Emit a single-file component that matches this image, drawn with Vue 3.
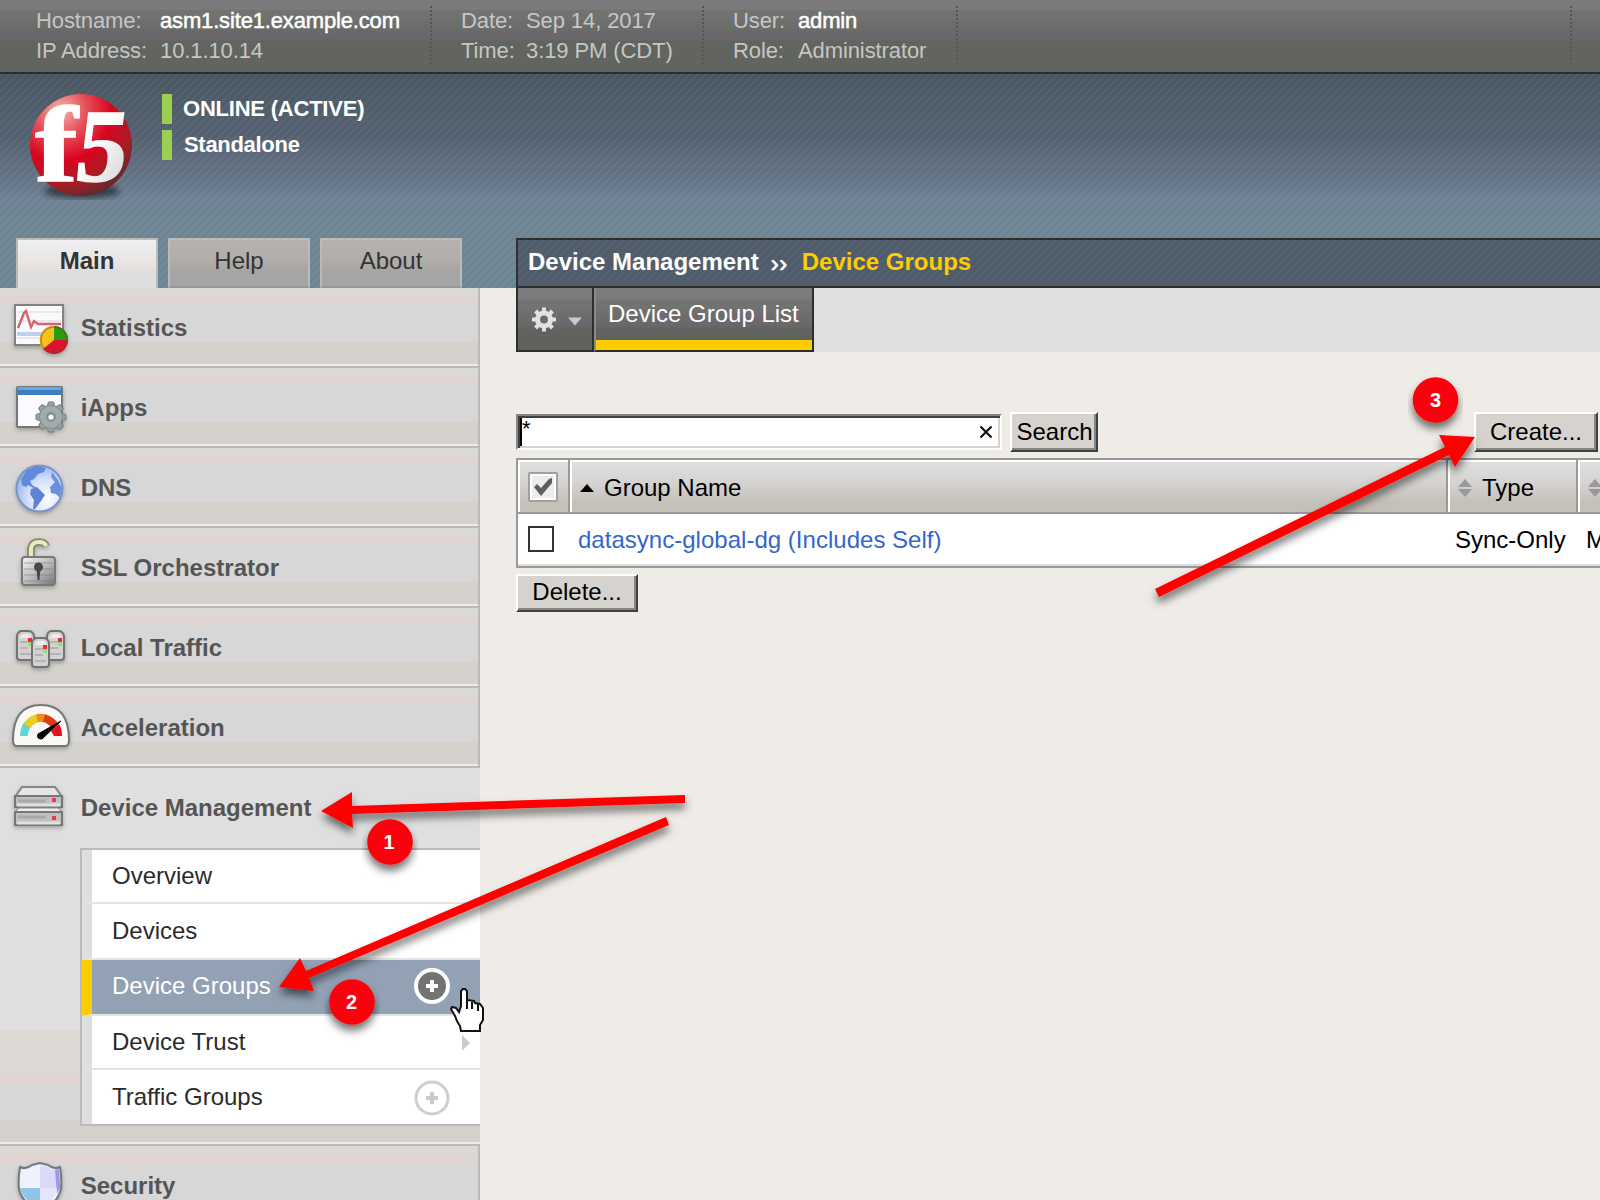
<script setup>
const hostInfo = [
  { key: 'host', rows: [['Hostname:', 'asm1.site1.example.com', true], ['IP Address:', '10.1.10.14', false]] },
  { key: 'time', rows: [['Date:', 'Sep 14, 2017', false], ['Time:', '3:19 PM (CDT)', false]] },
  { key: 'user', rows: [['User:', 'admin', true], ['Role:', 'Administrator', false]] },
]
const tabs = ['Main', 'Help', 'About']
const items = [
  { id: 'stats', label: 'Statistics' },
  { id: 'iapps', label: 'iApps' },
  { id: 'dns', label: 'DNS' },
  { id: 'ssl', label: 'SSL Orchestrator' },
  { id: 'traffic', label: 'Local Traffic' },
  { id: 'accel', label: 'Acceleration' },
  { id: 'device', label: 'Device Management', open: true },
  { id: 'security', label: 'Security' },
]
const submenu = [
  { label: 'Overview' },
  { label: 'Devices' },
  { label: 'Device Groups', active: true, plus: true },
  { label: 'Device Trust', more: true },
  { label: 'Traffic Groups', plus: true },
]
const teeth = [0, 45, 90, 135]
</script>

<template>
  <div class="page">
    <header class="topbar">
      <div v-for="g in hostInfo" :key="g.key" class="info" :class="g.key">
        <template v-for="r in g.rows" :key="r[0]">
          <span>{{ r[0] }}</span><span :class="{ bright: r[2] }">{{ r[1] }}</span>
        </template>
      </div>
      <div class="rest"></div>
    </header>

    <section class="banner">
      <div class="status">
        <svg class="logo" width="126" height="112" viewBox="18 88 126 112">
          <defs>
            <radialGradient id="ball" cx="0.3" cy="0.16" r="0.9">
              <stop offset="0" stop-color="#f7b5ae" />
              <stop offset="0.28" stop-color="#e5505a" />
              <stop offset="0.55" stop-color="#d9041f" />
              <stop offset="0.8" stop-color="#a81d26" />
              <stop offset="1" stop-color="#5d2a2c" />
            </radialGradient>
            <linearGradient id="five" x1="0" y1="0" x2="1" y2="1">
              <stop offset="0.4" stop-color="#fff" />
              <stop offset="1" stop-color="#cfcfcf" />
            </linearGradient>
            <filter id="soft"><feGaussianBlur stdDeviation="3" /></filter>
          </defs>
          <ellipse cx="82" cy="191" rx="38" ry="7" fill="#222b33" opacity="0.8" filter="url(#soft)" />
          <circle cx="81" cy="145" r="51" fill="url(#ball)" />
          <text transform="translate(35 181) scale(1.2 1)" font-size="107" class="glyph" fill="#fff" stroke="#fff" stroke-width="1.500">f</text>
          <text transform="translate(73 181) skewX(-7) scale(0.98 1)" font-size="104" class="glyph" fill="url(#five)" stroke="url(#five)" stroke-width="1.500">5</text>
        </svg>
        <div class="states">
          <div class="state">ONLINE (ACTIVE)</div>
          <div class="state second">Standalone</div>
        </div>
      </div>
      <div class="banner-bottom">
        <nav class="tabs">
          <div v-for="(t, i) in tabs" :key="t" class="tab" :class="{ on: i === 0 }">{{ t }}</div>
        </nav>
        <div class="crumbs"><b>Device Management</b><span class="sep">››</span><b class="here">Device Groups</b></div>
      </div>
    </section>

    <div class="body">
      <aside class="side">
        <div v-for="it in items" :key="it.id" class="item" :class="{ open: it.open }">
          <div class="head">
            <svg class="icon" width="80" height="76" viewBox="0 0 80 76">
              <g v-if="it.id === 'stats'">
                <rect x="15" y="17" width="48" height="40" fill="#fafafc" stroke="#85817f" stroke-width="2" />
                <path d="M17 24h44M17 33h44M17 50h44" stroke="#e8eaf0" stroke-width="2" />
                <path d="M17 46h44" stroke="#bcd4ea" stroke-width="4" />
                <path d="M18 40l6-15 2-2 5 16 3-6 4 3h23" fill="none" stroke="#d8606a" stroke-width="2.4" />
                <circle cx="54" cy="52" r="14" fill="#d9142e" />
                <path d="M54 52V38a14 14 0 0 1 14 14z" fill="#279c10" />
                <path d="M54 52V38a14 14 0 0 0-11 23z" fill="#f6c21b" />
                <circle cx="54" cy="52" r="13" fill="none" stroke="#6e4a20" stroke-opacity="0.45" stroke-width="1.6" />
              </g>
              <g v-else-if="it.id === 'iapps'">
                <rect x="17" y="19" width="45" height="40" rx="1" fill="#fbfbfd" stroke="#77777b" stroke-width="2" />
                <rect x="18" y="19" width="43" height="8" fill="#3b7dbd" />
                <rect x="18" y="19" width="43" height="3" fill="#61a9e8" />
                <g transform="translate(51 49)">
                  <path v-for="a in teeth" :key="a" :transform="`rotate(${a})`" d="M-2.500-15h5l1.500 5h-8zM-2.500 15h5l1.500-5h-8z" fill="#9aa3a4" stroke="#747d7f" stroke-width="1" />
                  <circle r="11.500" fill="#a3acad" stroke="#828b8d" stroke-width="1" />
                  <circle r="5" fill="#858e90" />
                  <circle r="2.600" fill="#fff" />
                </g>
              </g>
              <g v-else-if="it.id === 'dns'">
                <radialGradient id="globe" cx="0.65" cy="0.7" r="0.8">
                  <stop offset="0" stop-color="#fff" />
                  <stop offset="0.5" stop-color="#d4e0fb" />
                  <stop offset="1" stop-color="#86a6ec" />
                </radialGradient>
                <circle cx="39.500" cy="40.500" r="23" fill="url(#globe)" stroke="#7c93c8" stroke-width="2" />
                <path d="M21 31l6-9 10-4 9 2-2 4-6 2-4 5-4 2 2 4 6 4-3 0-7-4-2 2-4-2z" fill="#6389da" />
                <path d="M31 41l6-2 8 8-4 6-6 8-2 0 1-9-4-6z" fill="#5c83d4" />
                <path d="M52 24l6 8 4 8-2 10-4-4-5-1-1-6 5-5-4-5z" fill="#6c90dd" />
              </g>
              <g v-else-if="it.id === 'ssl'">
                <linearGradient id="lock" x1="0" y1="0" x2="1" y2="1">
                  <stop offset="0" stop-color="#f5f5f5" />
                  <stop offset="0.5" stop-color="#bdbdbd" />
                  <stop offset="1" stop-color="#777" />
                </linearGradient>
                <path d="M31 31V20q1-6 8-6 6 0 7 4" fill="none" stroke="#8b8a55" stroke-width="7.500" />
                <path d="M31 31V20q1-6 8-6 6 0 7 4" fill="none" stroke="#e9e8cb" stroke-width="4" />
                <rect x="22" y="29" width="33" height="28" rx="3" fill="url(#lock)" stroke="#77787a" stroke-width="2" />
                <path d="M24 35h29M24 41h29M24 47h29M24 53h29" stroke="#777" stroke-opacity="0.55" />
                <circle cx="38.500" cy="39" r="4.500" fill="#484848" />
                <path d="M36.500 40h4l-1 12h-2z" fill="#484848" />
              </g>
              <g v-else-if="it.id === 'traffic'">
                <g v-for="(p, i) in [[16, 22], [46, 22], [31, 29]]" :key="i" :transform="`translate(${p[0]} ${p[1]})`">
                  <path d="M1 6q1-5 5-5h6q5 0 6 5v21q0 3-3 3H4q-3 0-3-3z" fill="#d2d2d2" stroke="#737373" stroke-width="2" />
                  <path d="M4 8q1-4 4-4h4q3 0 3 4z" fill="#ececec" />
                  <path d="M4 12h8M4 18h8M4 24h11" stroke="#b4b4b4" stroke-width="2" />
                  <rect x="12" y="8" width="4" height="4" fill="#ef263c" />
                  <rect x="12" y="12" width="4" height="4" fill="#8fe26f" />
                </g>
              </g>
              <g v-else-if="it.id === 'accel'">
                <path d="M13 52q0-35 28-35t28 35q0 6-4 6H17q-4 0-4-6z" fill="#f8f8f6" stroke="#777" stroke-width="2" />
                <path d="M24 48q0-7 4-12" fill="none" stroke="#5fd6d2" stroke-width="8" />
                <path d="M27 38q4-7 12-8" fill="none" stroke="#e8cd22" stroke-width="8" />
                <path d="M37 30q6-1 9 1" fill="none" stroke="#f08a1c" stroke-width="8" />
                <path d="M44 30q7 2 11 8" fill="none" stroke="#e33a16" stroke-width="8" />
                <path d="M54 48h8q0-8-3-12l-8 7z" fill="#e8101c" />
                <path d="M61 33L38 46q-2 5 4 5z" fill="#000" stroke="#000" stroke-width="1" />
              </g>
              <g v-else-if="it.id === 'device'">
                <path d="M15 29l7-10h33l7 10z" fill="#e6e6e6" stroke="#858585" stroke-width="2" />
                <rect x="15" y="28" width="47" height="11" fill="#c0c0c0" stroke="#777" stroke-width="2" />
                <path d="M15 44l4-4h39l4 4z" fill="#eee" stroke="#8a8a8a" />
                <rect x="15" y="44" width="47" height="13" fill="#c0c0c0" stroke="#777" stroke-width="2" />
                <path d="M17 37h43M17 55h43" stroke="#e0e0e0" stroke-width="3" />
                <path d="M18 33h28M18 49h28" stroke="#a9a9a9" stroke-width="3" />
                <path d="M52 32h4M52 50h4" stroke="#f13a48" stroke-width="4" />
              </g>
              <g v-else>
                <path d="M20 21q6 3 12-2l8-2 8 2q6 5 12 2 2 12 1 22-3 14-21 22-18-8-21-22-1-10 1-22z" fill="#eef2ff" stroke="#77787e" stroke-width="2" />
                <path d="M40 19l8 2q6 4 11 2l1 19H40z" fill="#dcd9fb" />
                <path d="M20 42h20v21q-16-7-20-21z" fill="#8fc4ea" />
                <path d="M55 24l4-1q1 12 1 19l-3 6z" fill="#9c98ec" />
                <path d="M40 42h17q-3 14-17 21z" fill="#e6e4fb" />
              </g>
            </svg>
            <span>{{ it.label }}</span>
          </div>
          <ul v-if="it.open" class="sub">
            <li v-for="s in submenu" :key="s.label" :class="{ active: s.active }">
              <span>{{ s.label }}</span>
              <svg v-if="s.plus" class="plus" width="36" height="36" viewBox="0 0 36 36">
                <circle cx="18" cy="18" r="16" :fill="s.active ? '#737373' : '#fff'" :stroke="s.active ? '#fff' : '#cecece'" :stroke-width="s.active ? 4 : 3" />
                <path d="M18 12v12M12 18h12" :stroke="s.active ? '#fff' : '#cacaca'" stroke-width="4" />
              </svg>
              <svg v-if="s.more" class="more" width="8" height="16" viewBox="0 0 8 16"><path d="M0 0l8 8-8 8z" fill="#cbcbcb" /></svg>
            </li>
          </ul>
        </div>
      </aside>

      <main class="main">
        <div class="toolbar">
          <div class="gear">
            <svg width="74" height="62" viewBox="0 0 74 62">
              <g transform="translate(26 31.500)">
                <path v-for="a in teeth" :key="a" :transform="`rotate(${a})`" d="M-2-12h4v24h-4z" fill="#e2e2e2" />
                <circle r="6.500" fill="none" stroke="#e2e2e2" stroke-width="5" />
                <circle r="4" fill="#6b6b6b" />
              </g>
              <path d="M50 29.500h14l-7 8z" fill="#c9c9c9" />
            </svg>
          </div>
          <div class="listtab">Device Group List</div>
        </div>

        <div class="searchrow">
          <div class="field"><span class="star">*</span><svg width="14" height="14" viewBox="0 0 14 14"><path d="M1.500 1.500l11 11M12.500 1.500l-11 11" stroke="#111" stroke-width="2.200" /></svg></div>
          <button class="btn search">Search</button>
          <button class="btn create">Create...</button>
        </div>

        <div class="table">
          <div class="thead">
            <div class="th check">
              <svg width="30" height="30" viewBox="0 0 30 30">
                <rect x="1" y="1" width="28" height="28" rx="1" fill="#fff" stroke="#a29fa1" stroke-width="2" />
                <rect x="4" y="4" width="22" height="22" fill="#ececea" />
                <path d="M6 15l3-3 4 4 8-9 3-1v5L13 24z" fill="#5c5f5c" />
              </svg>
            </div>
            <div class="th name"><svg width="16" height="8" viewBox="0 0 16 8"><path d="M8 0l7 8H1z" /></svg>Group Name</div>
            <div class="th type"><svg width="14" height="18" viewBox="0 0 14 18"><path d="M7 0l7 8H0zM7 18l7-8H0z" fill="#999" /></svg>Type</div>
            <div class="th last"><svg width="14" height="18" viewBox="0 0 14 18"><path d="M7 0l7 8H0zM7 18l7-8H0z" fill="#999" /></svg></div>
          </div>
          <div class="row">
            <div class="check"><i class="box"></i></div>
            <a class="link">datasync-global-dg (Includes Self)</a>
            <div class="kind">Sync-Only</div>
            <div class="members">M</div>
          </div>
        </div>
        <button class="btn delete">Delete...</button>
      </main>
    </div>

    <svg class="notes" width="1600" height="1200" viewBox="0 0 1600 1200">
      <defs>
        <filter id="drop" x="-10%" y="-60%" width="120%" height="250%">
          <feDropShadow dx="0" dy="6" stdDeviation="4.500" flood-color="#000" flood-opacity="0.55" />
        </filter>
      </defs>
      <g fill="#fe0000">
        <path filter="url(#drop)" d="M321 811l31-19v14l333-11v8l-333 11 1 14z" />
        <path filter="url(#drop)" d="M279 987l21-29 6 13 360-154 3 8-360 153 5 13z" />
        <path filter="url(#drop)" d="M1475 437l-36-2 6 12-290 142 4 8 290-142 6 12z" />
      </g>
      <g v-for="(p, i) in [[390, 842], [352, 1002], [1435.500, 400]]" :key="i" filter="url(#drop)">
        <circle :cx="p[0]" :cy="p[1]" r="22.800" fill="#fb0007" />
      </g>
      <g class="num">
        <text x="389" y="849">1</text>
        <text x="351.500" y="1009">2</text>
        <text x="1435.500" y="407">3</text>
      </g>
      <path d="M461 1006V991l2-2h2l2 2v9l7 1 1 2 5 1 3 4v12l-3 5v6h-19l-1-5-3-5-2-5-4-7 1-2 4 1 3 4z" fill="#fff" stroke="#111" stroke-width="2" />
      <path d="M467 1000v9M472 1002v7M478 1004v7" stroke="#111" stroke-width="2" />
    </svg>
  </div>
</template>

<style>
body { margin: 0; }
</style>

<style scoped>
* { box-sizing: border-box; }
.page {
  position: relative;
  width: 1600px;
  height: 1200px;
  overflow: hidden;
  background: #efece7;
  font-family: "Liberation Sans", Arial, sans-serif;
  font-size: 24px;
  line-height: 28px;
  white-space: nowrap;
}
.topbar {
  display: flex;
  height: 74px;
  padding: 6px 0 8px 36px;
  border-bottom: 2px solid #2d2e2e;
  background: linear-gradient(#7c7a7d 0 9px, #70736f 11px 19px, #706d70 21px, #6b6d69 27px 29px, #6a686b 31px 38px, #62645f 42px);
  font-size: 22px;
  line-height: 30px;
  color: #c6c6c6;
}
.info {
  display: grid;
  grid-template-columns: 124px auto;
  align-content: start;
  letter-spacing: -0.1px;
  position: relative;
}
.info::after {
  content: "";
  position: absolute;
  right: 0;
  top: 0;
  height: 58px;
  width: 2px;
  background: repeating-linear-gradient(#555753 0 2px, transparent 2px 4px);
}
.host { width: 396px; }
.time { width: 272px; padding-left: 29px; grid-template-columns: 65px auto; }
.user { width: 254px; padding-left: 29px; grid-template-columns: 65px auto; }
.rest {
  width: 614px;
  height: 58px;
  background: repeating-linear-gradient(#555753 0 2px, transparent 2px 4px) right / 2px 100% no-repeat;
}
.bright { color: #fff; -webkit-text-stroke: 0.5px #fff; letter-spacing: -0.16px; }

.banner {
  display: flex;
  flex-direction: column;
  justify-content: space-between;
  height: 214px;
  background:
    repeating-linear-gradient(135deg, rgba(255, 255, 255, 0.03) 0 2.8px, rgba(0, 0, 0, 0.015) 2.8px 5.657px),
    linear-gradient(#4a5864, #566373 30%, #66778a 50%, #708296 58%, #708694 66%, #6f8694);
}
.status { display: flex; padding: 14px 0 0 18px; }
.logo { overflow: visible; }
.glyph { font-family: "Liberation Serif", serif; font-weight: bold; }
.states { padding: 6px 0 0 18px; }
.state {
  height: 30px;
  margin-bottom: 6px;
  padding-left: 11px;
  border-left: 10px solid #9bcf4f;
  color: #fff;
  font-size: 22px;
  font-weight: bold;
  line-height: 29px;
  letter-spacing: -0.22px;
}
.state.second { padding-left: 12px; letter-spacing: -0.3px; }
.banner-bottom { display: flex; height: 50px; }
.tabs { display: flex; gap: 10px; width: 516px; padding-left: 16px; }
.tab {
  width: 142px;
  border: 2px solid #bcbab9;
  border-bottom: 2px solid #999;
  background: linear-gradient(#b5b1b0, #b3aeaa 40%, #a5a5a5 70%);
  color: #333;
  line-height: 42px;
  text-align: center;
}
.tab.on {
  border-bottom: 0;
  background: linear-gradient(#f0eff1, #e8e5e1 50%, #dedede 65%);
  font-weight: bold;
}
.crumbs {
  display: flex;
  flex: 1;
  padding: 8px 0 0 10px;
  border: 2px solid #2d2e2e;
  border-right: 0;
  background: repeating-linear-gradient(135deg, #536070 0 2.8px, #505c69 2.8px 5.657px);
  color: #fff;
}
.sep { width: 43px; padding: 2px 0 0 12px; letter-spacing: 0.5px; -webkit-text-stroke: 0.7px #fff; }
.here { color: #ffcc00; }

.body { display: flex; height: 912px; }
.side { width: 480px; flex: none; }
.item {
  height: 80px;
  border-right: 2px solid #bababa;
  border-bottom: 2px solid #bababa;
  box-shadow: inset 0 -2px #efece8;
  background: linear-gradient(#dddad5 0 8px, #dfd6d4 8px 18px, #d7d7d7 18px 54px, #d5d2cd 54px);
  color: #555;
}
.item.open {
  height: 378px;
  border-right: 0;
  background: linear-gradient(#dfdfdf 0 262px, #dddad5 262px 306px, #dfd6d4 306px 316px, #d7d7d7 316px 352px, #d5d2cd 352px);
}
.head { display: flex; height: 80px; font-weight: bold; line-height: 80px; }
.head span { padding-left: 0.7px; }
.icon { flex: none; filter: drop-shadow(0 2px 2px rgba(0, 0, 0, 0.28)); }
.sub {
  width: 400px;
  margin: 0 0 0 80px;
  padding: 0;
  list-style: none;
  border: 2px solid #bababa;
  border-right: 0;
  background: #fff;
  color: #2b2b2b;
}
.sub li {
  display: flex;
  align-items: center;
  height: 56px;
  padding-left: 20px;
  border-left: 10px solid #dedede;
  border-bottom: 2px solid #e4e4e4;
}
.sub li:nth-child(1), .sub li:nth-child(4) { height: 54px; }
.sub li:last-child { height: 54px; border-bottom: 0; }
.sub li span { flex: 1; }
.sub li.active span { padding-bottom: 2px; }
.sub li.active { border-left-color: #ffcc00; background: #93a1b5; color: #fff; }
.plus { margin: 1px 30px 0 0; }
.active .plus { margin-top: -2px; }
.more { margin: 2px 10px 0 0; }

.main { flex: 1; min-width: 0; padding-left: 36px; overflow: hidden; }
.toolbar { display: flex; height: 64px; background: #dfdfdf; color: #fff; }
.gear, .listtab {
  border: 2px solid #2d2e2e;
  border-top: 0;
  background: linear-gradient(#7e7b7e 0 10px, #70736f 14px 20px, #706d70 26px, #696769 38px, #60625e 42px);
}
.gear { width: 78px; }
.listtab {
  width: 220px;
  border-left: 2px solid #8b8b88;
  padding-left: 12px;
  line-height: 52px;
  box-shadow: inset 0 -10px #ffcc00;
}
.searchrow { display: flex; height: 42px; margin-top: 60px; }
.field {
  display: flex;
  justify-content: space-between;
  width: 486px;
  height: 36px;
  margin: 2px 8px 0 0;
  padding: 9px 7px 0 0;
  border: 2px solid #858585;
  border-right-color: #fff;
  border-bottom-color: #fff;
  background: #fff;
  box-shadow: inset 2px 2px #404040, inset -2px -2px #d6d3ce;
}
.star {
  height: 28px;
  margin: -7px 0 0 2px;
  border-left: 2px solid #000;
  font-size: 22px;
  line-height: 22px;
}
.btn {
  height: 40px;
  margin: 0;
  padding: 0;
  border: 2px solid #fff;
  border-right-color: #404040;
  border-bottom-color: #404040;
  background: #d6d3ce;
  box-shadow: inset -2px -2px #858585;
  color: #000;
  font: 24px/34px "Liberation Sans", Arial, sans-serif;
}
.search { width: 88px; padding-left: 1px; }
.create { width: 124px; margin-left: 376px; }
.delete { display: block; width: 122px; height: 38px; margin-top: 6px; padding-bottom: 2px; line-height: 30px; }
.table { margin-top: 4px; height: 110px; border: solid #999; border-width: 2px 0 2px 2px; background: #fff; box-shadow: inset 0 -2px #dedede; }
.thead { display: flex; height: 54px; border-bottom: 2px solid #999; }
.th {
  display: flex;
  flex: none;
  align-items: center;
  border-right: 2px solid #999;
  box-shadow: inset 2px 2px #fff;
  background: linear-gradient(#dfdfdf 4px, #d6d3d0 22px, #ccc8c8 34px, #c4c1b9 42px);
}
.th.check { width: 52px; padding: 2px 0 0 10px; }
.th.name { width: 878px; padding: 3px 0 0 9px; gap: 9px; }
.th.type { width: 130px; padding: 3px 0 0 10px; gap: 10px; }
.th.last { width: 130px; padding: 3px 0 0 10px; }
.row { display: flex; align-items: center; height: 50px; }
.row > * { flex: none; }
.row .check { width: 52px; padding-left: 10px; }
.box { display: block; width: 26px; height: 26px; border: 2px solid #333; }
.link { width: 878px; padding: 1px 0 0 8px; color: #3366cc; letter-spacing: 0.02px; }
.kind { width: 130px; padding: 1px 0 0 7px; }
.members { padding: 1px 0 0 8px; }

.notes { position: absolute; left: 0; top: 0; pointer-events: none; }
.num { fill: #fff; font: bold 20px "Liberation Sans", Arial, sans-serif; text-anchor: middle; }
</style>
